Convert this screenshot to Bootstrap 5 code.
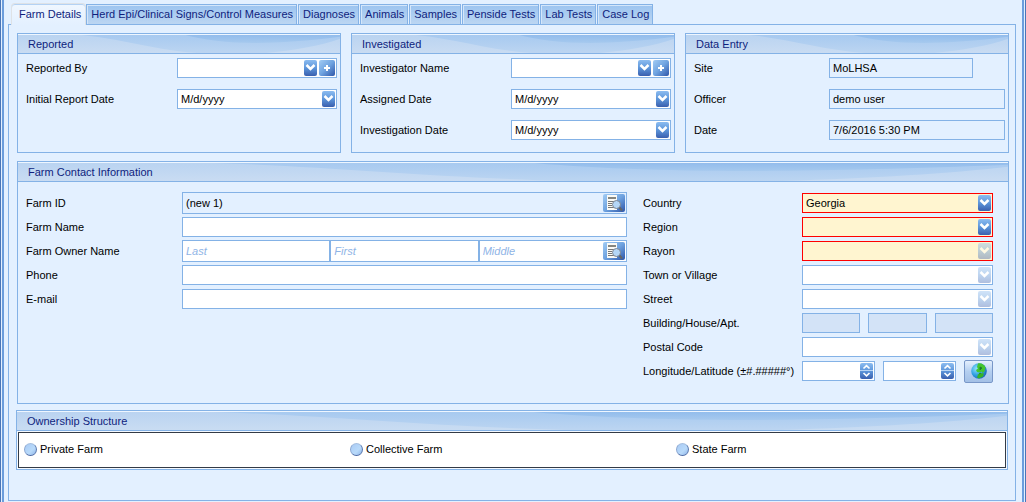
<!DOCTYPE html>
<html lang="en">
<head>
<meta charset="utf-8">
<meta name="viewport" content="width=device-width, initial-scale=1">
<title>Farm Details</title>
<link href="https://cdn.jsdelivr.net/npm/bootstrap@5.3.0/dist/css/bootstrap.min.css" rel="stylesheet">
<style>
:root { --line: #84b2e6; --bg: #e3f0ff; --navy: #0f1e7d; }
body { font: 11px/14px "Liberation Sans", Arial, sans-serif; color: #000; background: var(--bg); }
button, input, select { font: inherit; color: inherit; }
.frame { min-height: 100vh; border-left: 1px solid #4a76b8; border-right: 1px solid #4a76b8; padding: 0 1px; }
.frame-inner { border-left: 2px solid #6b9ddc; border-right: 2px solid #6b9ddc; padding: 3px 6px 1px 4px; }

/* tab strip */
.tabstrip { padding-left: 3px; gap: 1px; margin-bottom: -1px; position: relative; }
.tabstrip .nav-link { padding: 2px 3px 3px 4px; height: 21px; margin-top: 1px; border: 1px solid var(--line); border-radius: 0; color: var(--navy); background: linear-gradient(#9cc4f0, #bcd6f2); box-shadow: inset 1px 1px #d4e6fa; white-space: nowrap; line-height: 14px; }
.tabstrip .nav-link.active { height: 22px; margin: 0 -1px 0 0; padding: 3px 4px 4px 7px; border-bottom: 0; border-radius: 4px 4px 0 0; color: var(--navy); background: linear-gradient(#f0f7ff, var(--bg)); box-shadow: inset 0 1px #b4d2f4; }
.tabpage { border: 1px solid var(--line); padding: 8px 6px 8px 8px; }

/* group panels */
.panel { border: 1px solid var(--line); min-width: 0; }
.panel-title { margin: 0; height: 20px; padding: 3px 10px 2px; font-size: 11px; line-height: 14px; font-weight: 400; color: var(--navy); border-bottom: 1px solid var(--line); box-shadow: inset 0 1px #eef6ff;
  background: #c5daf2 url("data:image/svg+xml,%3Csvg xmlns='http://www.w3.org/2000/svg' viewBox='0 0 324 20' preserveAspectRatio='none'%3E%3Cdefs%3E%3ClinearGradient id='a' x2='0' y2='1'%3E%3Cstop stop-color='%23b9d3f1'/%3E%3Cstop offset='1' stop-color='%23c9dcf2'/%3E%3C/linearGradient%3E%3ClinearGradient id='b' x2='0' y2='1'%3E%3Cstop stop-color='%23a6c9f0'/%3E%3Cstop offset='1' stop-color='%23bcd5f1'/%3E%3C/linearGradient%3E%3ClinearGradient id='c' x2='0' y2='1'%3E%3Cstop stop-color='%2390bbec'/%3E%3Cstop offset='1' stop-color='%23a6c9ee'/%3E%3C/linearGradient%3E%3C/defs%3E%3Cpath fill='url(%23a)' d='M0 0h324v20H0z'/%3E%3Cpath fill='url(%23b)' d='M50 0C95 2 130 16 180 20H250C280 17 305 12 324 5V0z'/%3E%3Cpath fill='url(%23c)' d='M165 0C205 12 255 12 324 3V0z'/%3E%3C/svg%3E") 0 0 / 100% 100%; }
.panel-rows { display: grid; row-gap: 11px; padding: 4px 3px 12px 8px; }
.field { display: flex; align-items: center; }
.field > label { flex: none; width: 151px; line-height: 14px; }
.entry .field > label { width: 135px; }

/* edit boxes */
.editbox { display: flex; align-items: center; flex: 1 1 0; min-width: 0; height: 20px; gap: 2px; padding: 0 1px 0 0; background: #fff; border: 1px solid var(--line); }
.editbox input, .editbox select { flex: 1 1 0; width: 0; min-width: 0; height: 16px; padding: 0 3px; line-height: 14px; border: 0; outline: 0; background: none; appearance: none; border-radius: 0; opacity: 1; }
.editbox input::placeholder { color: #8fb4e6; font-style: italic; opacity: 1; }
.editbox.ro { background: var(--bg); }
.editbox.off { background: #d3e3f7; }
.editbox.must { background: #fff5d0; border-color: #f00; }
.editbox.tall { height: 22px; }
.editbox.site { flex: 0 1 144px; }
.px { display: block; flex: none; height: 16px; width: 13px; padding: 0; border: 0; background: none; line-height: 0; }
.px svg, .pickwrap svg { display: block; }
.px.plus { width: 16px; }
.px.find { width: 22px; height: 18px; }
.pickwrap { display: flex; position: relative; flex: 1 1 0; min-width: 0; }
.pickwrap select { padding-right: 17px; }
.pickwrap svg { position: absolute; right: 0; top: 0; pointer-events: none; }
.dim svg { opacity: .4; }

.contact { padding: 9px 15px 20px 8px; gap: 16px; }
.contact .field { height: 24px; }
.contact .left { flex: 1 1 0; min-width: 0; }
.contact .left .field > label { width: 156px; }
.contact .right { flex: none; width: 350px; }
.contact .right .field > label { width: 159px; }
.globe { flex: none; width: 29px; height: 23px; padding: 2px 5px; border: 1px solid #7897c8; border-radius: 2px; background: linear-gradient(#e4effd, #b4cff0 50%, #a3c0e6); line-height: 0; }

.owner { margin: 6px 1px 0 -1px; }
.choices { margin: 1px; padding: 10px 3px 11px 5px; background: #fff; border: 1px solid #333b46; display: grid; grid-template-columns: repeat(3, 1fr); box-shadow: 0 0 0 1px #f4f9ff; }
.choice { display: flex; align-items: center; gap: 3px; line-height: 13px; }
.choice input { appearance: none; margin: 0; width: 13px; height: 13px; border-radius: 50%; border: 1px solid; border-color: #a5bfe0 #5a78ae #4b68a2 #8aa6d0; background: linear-gradient(135deg, #a9cbf5, #b9dafa 60%, #8fb4e8); }
.choice input:checked { box-shadow: inset 0 0 0 3px #b9dafa; background: #1f3f8f; }
</style>
<script src="https://cdn.jsdelivr.net/npm/bootstrap@5.3.0/dist/js/bootstrap.bundle.min.js"></script>
</head>
<body>
<svg width="0" height="0" class="position-absolute" aria-hidden="true">
  <defs>
    <linearGradient id="gBtn" x2="0" y2="1"><stop stop-color="#8cbcf0"/><stop offset=".5" stop-color="#5c95da"/><stop offset="1" stop-color="#3a5fae"/></linearGradient>
    <linearGradient id="gWide" x2="1" y2="1"><stop stop-color="#a2ccf4"/><stop offset=".5" stop-color="#6fa3e0"/><stop offset="1" stop-color="#2e55a8"/></linearGradient>
    <radialGradient id="gSea" cx=".35" cy=".35" r=".7"><stop stop-color="#8fe2fb"/><stop offset=".6" stop-color="#2f9fe0"/><stop offset="1" stop-color="#1c66b8"/></radialGradient>
    <symbol id="down" viewBox="0 0 13 16"><rect width="13" height="16" rx="2" fill="url(#gBtn)"/><path d="M2.5 5 6.500 9 10.500 5" fill="none" stroke="#fff" stroke-width="2.500"/></symbol>
    <symbol id="plus" viewBox="0 0 16 16"><rect width="16" height="16" rx="2" fill="url(#gWide)"/><path d="M5 8h6M8 5v6" stroke="#fff" stroke-width="2"/></symbol>
    <symbol id="spin" viewBox="0 0 13 16"><rect width="13" height="16" rx="2" fill="url(#gBtn)"/><path d="M0 7.500h13" stroke="#b8d4f4"/><path d="M3.500 5.500 6.500 2.700 9.500 5.500M3.500 10 6.500 12.800 9.500 10" fill="none" stroke="#fff" stroke-width="1.700"/></symbol>
    <symbol id="find" viewBox="0 0 22 18"><rect width="22" height="18" rx="2" fill="url(#gWide)"/><path d="M4 1h10v15H4z" fill="#fafaf6"/><path d="M5 4h8" stroke="#85857f" stroke-width="2"/><path d="M5 7.500h6M5 9.500h4M5 11.500h4M5 13.500h6" stroke="#777"/><circle cx="13.500" cy="10.500" r="4" fill="#b4d6f6" stroke="#7c8490"/><path d="m16.500 13.500 2.500 3" stroke="#666" stroke-width="2"/></symbol>
    <symbol id="earth" viewBox="0 0 16 16"><circle cx="8" cy="8" r="7.800" fill="url(#gSea)"/><path d="M7 .5c3-.8 6.500 1 7.500 4l-1 4-2 1.500-1-1.500-2 1-2.500-.5-1-2 2-1.500L6 4z" fill="#43c52d"/><path d="m9 10 4 .5-1 3-4 2-2-1 1-3z" fill="#35b526"/><path d="m9 4 2 1-2 2zM8 11l2-1" fill="#1d7a2e" stroke="#1d7a2e" stroke-width=".8"/></symbol>
  </defs>
</svg>
<div class="frame"><div class="frame-inner d-flex flex-column min-vh-100">
  <nav class="nav nav-tabs border-0 tabstrip flex-nowrap" aria-label="Case sections">
    <a class="nav-link active" href="#farm" aria-current="page">Farm Details</a>
    <a class="nav-link" href="#herd">Herd Epi/Clinical Signs/Control Measures</a>
    <a class="nav-link" href="#diagnoses">Diagnoses</a>
    <a class="nav-link" href="#animals">Animals</a>
    <a class="nav-link" href="#samples">Samples</a>
    <a class="nav-link" href="#penside">Penside Tests</a>
    <a class="nav-link" href="#lab">Lab Tests</a>
    <a class="nav-link" href="#log">Case Log</a>
  </nav>
  <main class="tabpage flex-grow-1" id="farm">
    <div class="d-flex" style="gap:10px">
      <section class="panel flex-fill w-100">
        <h2 class="panel-title">Reported</h2>
        <div class="panel-rows">
          <div class="field"><label for="repBy">Reported By</label><div class="editbox"><div class="pickwrap"><select id="repBy"><option></option></select><svg width="13" height="16"><use href="#down"/></svg></div><button class="px plus" type="button" aria-label="Add reporter"><svg width="16" height="16"><use href="#plus"/></svg></button></div></div>
          <div class="field"><label for="repDate">Initial Report Date</label><div class="editbox"><input id="repDate" value="M/d/yyyy"><button class="px" type="button" aria-label="Pick date"><svg width="13" height="16"><use href="#down"/></svg></button></div></div>
        </div>
      </section>
      <section class="panel flex-fill w-100">
        <h2 class="panel-title">Investigated</h2>
        <div class="panel-rows">
          <div class="field"><label for="invBy">Investigator Name</label><div class="editbox"><div class="pickwrap"><select id="invBy"><option></option></select><svg width="13" height="16"><use href="#down"/></svg></div><button class="px plus" type="button" aria-label="Add investigator"><svg width="16" height="16"><use href="#plus"/></svg></button></div></div>
          <div class="field"><label for="asgDate">Assigned Date</label><div class="editbox"><input id="asgDate" value="M/d/yyyy"><button class="px" type="button" aria-label="Pick date"><svg width="13" height="16"><use href="#down"/></svg></button></div></div>
          <div class="field"><label for="invDate">Investigation Date</label><div class="editbox"><input id="invDate" value="M/d/yyyy"><button class="px" type="button" aria-label="Pick date"><svg width="13" height="16"><use href="#down"/></svg></button></div></div>
        </div>
      </section>
      <section class="panel flex-fill w-100 entry">
        <h2 class="panel-title">Data Entry</h2>
        <div class="panel-rows">
          <div class="field"><label for="site">Site</label><div class="editbox ro site"><input id="site" value="MoLHSA" readonly></div></div>
          <div class="field"><label for="officer">Officer</label><div class="editbox ro"><input id="officer" value="demo user" readonly></div></div>
          <div class="field"><label for="entDate">Date</label><div class="editbox ro"><input id="entDate" value="7/6/2016 5:30 PM" readonly></div></div>
        </div>
      </section>
    </div>

    <section class="panel mt-2">
      <h2 class="panel-title">Farm Contact Information</h2>
      <div class="contact d-flex">
        <div class="left">
          <div class="field"><label for="farmId">Farm ID</label><div class="editbox ro tall"><input id="farmId" value="(new 1)" readonly><button class="px find" type="button" aria-label="Find farm"><svg width="22" height="18"><use href="#find"/></svg></button></div></div>
          <div class="field"><label for="farmName">Farm Name</label><div class="editbox"><input id="farmName"></div></div>
          <div class="field"><label for="last">Farm Owner Name</label><div class="editbox tall"><input id="last" placeholder="Last"></div><div class="editbox tall"><input placeholder="First" aria-label="First name"></div><div class="editbox tall"><input placeholder="Middle" aria-label="Middle name"><button class="px find" type="button" aria-label="Find owner"><svg width="22" height="18"><use href="#find"/></svg></button></div></div>
          <div class="field"><label for="phone">Phone</label><div class="editbox"><input id="phone" type="tel"></div></div>
          <div class="field"><label for="email">E-mail</label><div class="editbox"><input id="email" type="email"></div></div>
        </div>
        <div class="right">
          <div class="field"><label for="country">Country</label><div class="editbox must"><div class="pickwrap"><select id="country"><option>Georgia</option></select><svg width="13" height="16"><use href="#down"/></svg></div></div></div>
          <div class="field"><label for="region">Region</label><div class="editbox must"><div class="pickwrap"><select id="region"><option></option></select><svg width="13" height="16"><use href="#down"/></svg></div></div></div>
          <div class="field"><label for="rayon">Rayon</label><div class="editbox must"><div class="pickwrap dim"><select id="rayon" disabled><option></option></select><svg width="13" height="16"><use href="#down"/></svg></div></div></div>
          <div class="field"><label for="town">Town or Village</label><div class="editbox"><div class="pickwrap dim"><select id="town" disabled><option></option></select><svg width="13" height="16"><use href="#down"/></svg></div></div></div>
          <div class="field"><label for="street">Street</label><div class="editbox"><div class="pickwrap dim"><select id="street" disabled><option></option></select><svg width="13" height="16"><use href="#down"/></svg></div></div></div>
          <div class="field"><label for="bld">Building/House/Apt.</label><div class="d-flex flex-fill" style="gap:8px"><div class="editbox off"><input id="bld" disabled></div><div class="editbox off"><input aria-label="House" disabled></div><div class="editbox off"><input aria-label="Apartment" disabled></div></div></div>
          <div class="field"><label for="post">Postal Code</label><div class="editbox"><div class="pickwrap dim"><select id="post" disabled><option></option></select><svg width="13" height="16"><use href="#down"/></svg></div></div></div>
          <div class="field"><label for="lon">Longitude/Latitude (±#.#####°)</label><div class="d-flex align-items-center flex-fill" style="gap:8px"><div class="editbox"><input id="lon"><button class="px" type="button" aria-label="Step longitude"><svg width="13" height="16"><use href="#spin"/></svg></button></div><div class="editbox"><input aria-label="Latitude"><button class="px" type="button" aria-label="Step latitude"><svg width="13" height="16"><use href="#spin"/></svg></button></div><button class="globe" type="button" aria-label="Show on map"><svg width="16" height="16"><use href="#earth"/></svg></button></div></div>
        </div>
      </div>
    </section>

    <section class="panel owner">
      <h2 class="panel-title">Ownership Structure</h2>
      <div class="choices">
        <label class="choice"><input type="radio" name="own">Private Farm</label>
        <label class="choice"><input type="radio" name="own">Collective Farm</label>
        <label class="choice"><input type="radio" name="own">State Farm</label>
      </div>
    </section>
  </main>
</div></div>
</body>
</html>
